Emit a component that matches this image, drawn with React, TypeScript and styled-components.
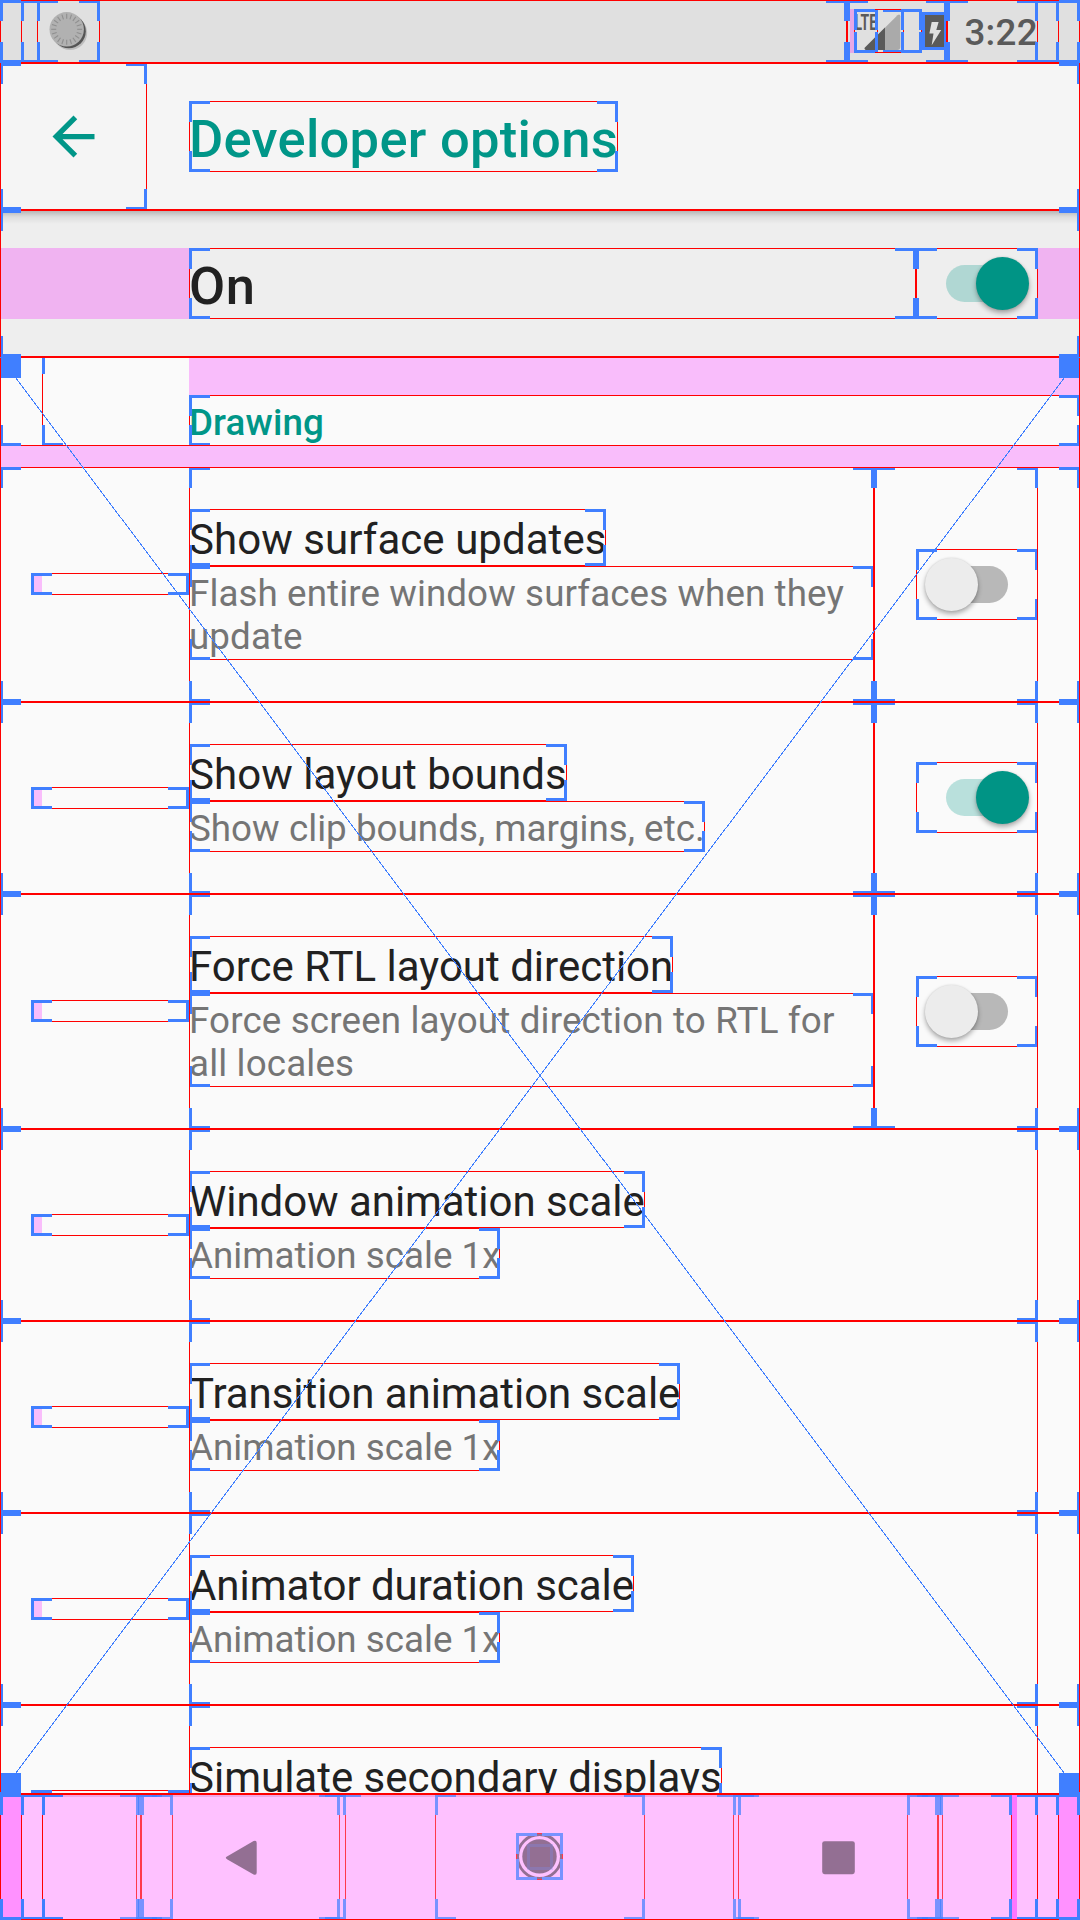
import React from "react";
import styled, { createGlobalStyle, css } from "styled-components";

const RED = "#ff0000";
const BLUE = "#407fff";
const PINK = "#f9bdfb";
const TEAL = "#009688";

const GlobalStyle = createGlobalStyle`
  html, body { margin: 0; padding: 0; background: #fafafa; }
  *, *::before, *::after { box-sizing: border-box; }
`;

/* Layout bounds: a one pixel red outline with 21x3 blue corner brackets. */
const bounds = css`
  position: relative;
  &::after {
    content: "";
    position: absolute;
    inset: 0;
    pointer-events: none;
    background-repeat: no-repeat;
    background-image:
      linear-gradient(${BLUE}, ${BLUE}), linear-gradient(${BLUE}, ${BLUE}),
      linear-gradient(${BLUE}, ${BLUE}), linear-gradient(${BLUE}, ${BLUE}),
      linear-gradient(${BLUE}, ${BLUE}), linear-gradient(${BLUE}, ${BLUE}),
      linear-gradient(${BLUE}, ${BLUE}), linear-gradient(${BLUE}, ${BLUE}),
      linear-gradient(${RED}, ${RED}), linear-gradient(${RED}, ${RED}),
      linear-gradient(${RED}, ${RED}), linear-gradient(${RED}, ${RED});
    background-position:
      left top, right top, left bottom, right bottom,
      left top, right top, left bottom, right bottom,
      left top, left bottom, left top, right top;
    background-size:
      21px 3px, 21px 3px, 21px 3px, 21px 3px,
      3px 21px, 3px 21px, 3px 21px, 3px 21px,
      100% 1px, 100% 1px, 1px 100%, 1px 100%;
  }
`;

const Screen = styled.div`
  width: 1080px;
  height: 1920px;
  display: flex;
  flex-direction: column;
  overflow: hidden;
  background: #fafafa;
  color: #212121;
  font-family: Roboto, "Noto Sans", sans-serif;
`;

/* ---------- status bar ---------- */

const StatusBar = styled.header`
  ${bounds}
  height: 63px;
  flex: none;
  padding: 0 21px;
  background: #e0e0e0;
`;

const StatusContents = styled.div`
  ${bounds}
  height: 63px;
  display: flex;
  padding-right: 21px;
`;

const NotificationArea = styled.div`
  ${bounds}
  flex: 1;
  padding-left: 16px;
`;

const NotificationIcon = styled.div`
  ${bounds}
  width: 63px;
  height: 63px;
  svg { display: block; }
`;

const SystemIcons = styled.div`
  ${bounds}
  width: 100px;
  padding: 9px 0 0 3px;
  display: flex;
`;

const SignalMargin = styled.div`
  width: 4px;
  height: 44px;
  background: #e6a9e6;
`;

const SignalGroup = styled.div`
  ${bounds}
  width: 68px;
  height: 44px;
`;

const SignalIcon = styled.div`
  ${bounds}
  width: 50px;
  height: 44px;
`;

const NetworkType = styled.div`
  ${bounds}
  width: 24px;
  height: 44px;
  svg { display: block; overflow: visible; }
`;

const Battery = styled.div`
  ${bounds}
  width: 25px;
  height: 38px;
  margin-top: 3px;
  svg { display: block; }
`;

const Clock = styled.div`
  ${bounds}
  width: 91px;
  font-size: 36.75px;
  font-weight: 500;
  line-height: 43px;
  letter-spacing: 0.3px;
  padding-top: 11px;
  text-align: right;
  color: #5a5a5a;
`;

/* ---------- toolbar and master switch ---------- */

const Toolbar = styled.div`
  ${bounds}
  height: 147px;
  flex: none;
  display: flex;
  background: #f5f5f5;
`;

const BackButton = styled.div`
  ${bounds}
  width: 147px;
  height: 147px;
  display: flex;
  align-items: center;
  justify-content: center;
`;

const ScreenTitle = styled.h1`
  ${bounds}
  margin: 38px 0 0 42px;
  width: 429px;
  height: 71px;
  padding-top: 7px;
  font-size: 52.5px;
  font-weight: 500;
  line-height: 62px;
  letter-spacing: 0.26px;
  white-space: nowrap;
  color: ${TEAL};
`;

const SwitchBar = styled.div`
  ${bounds}
  height: 147px;
  flex: none;
  display: flex;
  padding: 38px 0 38px;
  background: linear-gradient(rgba(0, 0, 0, 0.26), rgba(0, 0, 0, 0.07) 7px, rgba(0, 0, 0, 0) 14px) #eeeeee;
`;

const BarMargin = styled.div<{ $width: number }>`
  width: ${(p) => p.$width}px;
  height: 71px;
  background: #f0b3f1;
`;

const BarLabel = styled.div`
  ${bounds}
  flex: 1;
  height: 71px;
  padding-top: 7px;
  font-size: 52.5px;
  font-weight: 500;
  line-height: 62px;
  letter-spacing: 0.5px;
`;

const SwitchBox = styled.div`
  ${bounds}
  width: 122px;
  height: 71px;
  flex: none;
  padding: 17px 0 0 30px;
`;

const Track = styled.div<{ $on: boolean }>`
  width: 62px;
  height: 37px;
  border-radius: 19px;
  background: ${(p) => (p.$on ? "rgba(0,150,136,0.26)" : "#b8b8b8")};
`;

const Thumb = styled.div<{ $on: boolean }>`
  position: absolute;
  top: 9px;
  left: ${(p) => (p.$on ? 60 : 9)}px;
  width: 53px;
  height: 53px;
  border-radius: 50%;
  background: ${(p) => (p.$on ? "#009485" : "#ececec")};
  box-shadow: 0 3px 5px rgba(0, 0, 0, 0.32), 0 0 2px rgba(0, 0, 0, 0.12);
`;

/* ---------- preference list ---------- */

const List = styled.main`
  ${bounds}
  height: 1437px;
  flex: none;
  overflow: hidden;
`;

const Category = styled.div`
  ${bounds}
  height: 93px;
  margin-top: -4px;
  padding-left: 42px;
`;

const CategoryContents = styled.div`
  ${bounds}
  height: 93px;
  padding-left: 147px;
`;

const CategoryMargin = styled.div`
  height: 42px;
  background: ${PINK};
`;

const CategoryTitle = styled.h2`
  ${bounds}
  margin: 0;
  height: 51px;
  padding-top: 6px;
  font-size: 36.75px;
  font-weight: 500;
  line-height: 43px;
  letter-spacing: 0.12px;
  color: ${TEAL};
`;

const CategoryGap = styled.div`
  height: 21px;
  background: ${PINK};
`;

const Row = styled.div`
  ${bounds}
  display: flex;
  min-height: 192px;
  padding: 0 42px 0 31px;
`;

const IconSlot = styled.div`
  ${bounds}
  width: 158px;
  height: 22px;
  margin-bottom: 1px;
  align-self: center;
  flex: none;
`;

const IconMargin = styled.div`
  width: 11px;
  height: 22px;
  background: ${PINK};
`;

const TextGroup = styled.div`
  ${bounds}
  flex: 1;
  min-width: 0;
  padding: 42px 0;
  display: flex;
  flex-direction: column;
  align-items: flex-start;
`;

const Title = styled.div<{ $tracking: number }>`
  ${bounds}
  height: 57px;
  padding-top: 6px;
  font-size: 42px;
  line-height: 49px;
  letter-spacing: ${(p) => p.$tracking}px;
  white-space: nowrap;
`;

const Summary = styled.div<{ $tracking: number }>`
  ${bounds}
  padding: 6px 0 2px;
  font-size: 36.75px;
  line-height: 43px;
  letter-spacing: ${(p) => p.$tracking}px;
  color: #757575;
`;

const WidgetFrame = styled.div`
  ${bounds}
  width: 164px;
  flex: none;
  display: flex;
  align-items: center;
  justify-content: flex-end;
  ${SwitchBox} { margin-bottom: 1px; }
`;

/* ---------- navigation bar ---------- */

const NavBar = styled.footer`
  ${bounds}
  height: 126px;
  flex: none;
  padding: 0 21px;
  background: #ff91ff;
`;

const NavFrame = styled.div`
  ${bounds}
  height: 126px;
  padding: 0 21px;
  background: linear-gradient(#efa9e6, #efa9e6) 0 0 / 100% 3px no-repeat #fec1ff;
`;

const NavContents = styled.div`
  ${bounds}
  height: 126px;
`;

const NavButtons = styled.div`
  height: 126px;
  display: flex;
  padding-left: 94px;
  opacity: 0.7;
`;

const NavButton = styled.div<{ $gap?: number }>`
  ${bounds}
  width: 210px;
  height: 126px;
  margin-right: ${(p) => p.$gap ?? 0}px;
  display: flex;
  align-items: center;
  justify-content: center;
`;

const HomeIcon = styled.div`
  ${bounds}
  width: 47px;
  height: 47px;
  margin: 0 1px 1px 0;
  svg { display: block; overflow: visible; }
`;

const HomeCore = styled.div`
  ${bounds}
  position: absolute;
  left: 11px;
  top: 11px;
  width: 26px;
  height: 26px;
  opacity: 0.25;
`;

const NavBounds = styled.div<{ $from: number; $to: number; $flat?: boolean }>`
  ${bounds}
  position: absolute;
  top: 0;
  left: ${(p) => p.$from - 42}px;
  width: ${(p) => p.$to - p.$from}px;
  height: ${(p) => (p.$flat ? 3 : 126)}px;
  opacity: 0.7;
  ${(p) => p.$flat && css`&::after { background-size: 21px 3px, 21px 3px, 0 0, 0 0, 0 0, 0 0, 0 0, 0 0, 0 0, 0 0, 0 0, 0 0; }`}
`;

const NavMargin = styled.div`
  position: absolute;
  top: 1px;
  left: 970px;
  width: 5px;
  height: 125px;
  background: #ff75ff;
`;

/* ---------- overlays ---------- */

const WindowEdges = styled.div`
  position: absolute;
  left: 0;
  top: 63px;
  width: 1080px;
  height: 1731px;
  border: solid ${RED};
  border-width: 0 1px;
  pointer-events: none;
`;

const ScrollCross = styled.svg`
  position: absolute;
  left: 0;
  top: 0;
  display: block;
`;

function Toggle({ on }: { on: boolean }) {
  return (
    <SwitchBox role="switch" aria-checked={on}>
      <Track $on={on} />
      <Thumb $on={on} />
    </SwitchBox>
  );
}

interface Preference {
  title: string;
  titleTracking?: number;
  summary?: string;
  summaryTracking?: number;
  on?: boolean;
}

const preferences: Preference[] = [
  {
    title: "Show surface updates",
    titleTracking: 0.05,
    summary: "Flash entire window surfaces when they update",
    summaryTracking: 0.09,
    on: false,
  },
  {
    title: "Show layout bounds",
    titleTracking: 0.05,
    summary: "Show clip bounds, margins, etc.",
    summaryTracking: 0.03,
    on: true,
  },
  {
    title: "Force RTL layout direction",
    summary: "Force screen layout direction to RTL for all locales",
    summaryTracking: 0.15,
    on: false,
  },
  { title: "Window animation scale", titleTracking: -0.05, summary: "Animation scale 1x" },
  { title: "Transition animation scale", titleTracking: -0.06, summary: "Animation scale 1x" },
  { title: "Animator duration scale", titleTracking: -0.05, summary: "Animation scale 1x" },
  { title: "Simulate secondary displays" },
];

function PreferenceRow({ title, titleTracking = 0, summary, summaryTracking = 0, on }: Preference) {
  return (
    <Row>
      <IconSlot>
        <IconMargin />
      </IconSlot>
      <TextGroup>
        <Title $tracking={titleTracking}>{title}</Title>
        {summary && <Summary $tracking={summaryTracking}>{summary}</Summary>}
      </TextGroup>
      {on !== undefined && (
        <WidgetFrame>
          <Toggle on={on} />
        </WidgetFrame>
      )}
    </Row>
  );
}

const ticks = Array.from({ length: 20 }, (_, i) => (i * 360) / 20);

function Spinner() {
  return (
    <svg width="63" height="63" viewBox="0 0 63 63">
      <circle cx="33" cy="32.8" r="17.2" fill="#bdbdbd" />
      <circle cx="31.8" cy="31.3" r="17" fill="#555" />
      <circle cx="29.7" cy="29.3" r="17.2" fill="#b1b1b1" />
      {ticks.map((a) => (
        <path key={a} d="M29.7 13.8v5" stroke="#8f8f8f" strokeWidth="1.1" transform={`rotate(${a} 29.7 29.3)`} />
      ))}
    </svg>
  );
}

export default function App() {
  return (
    <>
      <GlobalStyle />
      <Screen>
        <StatusBar>
          <StatusContents>
            <NotificationArea>
              <NotificationIcon>
                <Spinner />
              </NotificationIcon>
            </NotificationArea>
            <SystemIcons>
              <SignalMargin />
              <SignalGroup>
                <SignalIcon>
                  <NetworkType>
                    <svg width="50" height="44" viewBox="0 0 50 44">
                      <path d="M11 40.5q-1-1 0-2L43.5 6.3q2.5-2 2.8 1V38q0 3-3 3H12z" fill="#aaaaaa" />
                      <path d="M11 40.5q-1-1 0-2L31 18.6V41H12z" fill="#5a5a5a" />
                      <text x="0.5" y="21" fontSize="22.5" fontWeight="700" textLength="22.5" lengthAdjust="spacingAndGlyphs" fill="#5a5a5a">
                        LTE
                      </text>
                    </svg>
                  </NetworkType>
                </SignalIcon>
              </SignalGroup>
              <Battery>
                <svg width="25" height="38" viewBox="0 0 25 38">
                  <rect x="3" y="3" width="19" height="32" fill="#5a5a5a" />
                  <path d="M9.7 10h6.9l-2.3 8h4.9L9.7 33.2l1.8-11.6H7.4z" fill="#e0e0e0" />
                </svg>
              </Battery>
            </SystemIcons>
            <Clock>3:22</Clock>
          </StatusContents>
        </StatusBar>

        <Toolbar>
          <BackButton>
            <svg width="63" height="63" viewBox="0 0 24 24">
              <path d="M20 11H7.83l5.59-5.59L12 4l-8 8 8 8 1.41-1.41L7.83 13H20v-2z" fill={TEAL} />
            </svg>
          </BackButton>
          <ScreenTitle>Developer options</ScreenTitle>
        </Toolbar>

        <SwitchBar>
          <BarMargin $width={189} />
          <BarLabel>On</BarLabel>
          <Toggle on />
          <BarMargin $width={42} />
        </SwitchBar>

        <List>
          <Category>
            <CategoryContents>
              <CategoryMargin />
              <CategoryTitle>Drawing</CategoryTitle>
            </CategoryContents>
          </Category>
          <CategoryGap />
          {preferences.map((p) => (
            <PreferenceRow key={p.title} {...p} />
          ))}
        </List>

        <NavBar>
          <NavFrame>
            <NavContents>
              <NavMargin />
              <NavButtons>
                <NavButton $gap={89}>
                  <svg width="63" height="63" viewBox="0 0 63 63">
                    <path d="M17.4 30.2L43.6 15q3.1-1.2 3.1 2v29.5q0 3.2-3.1 2L17.4 33.4q-3.2-1.6 0-3.2z" fill="#664d66" />
                  </svg>
                </NavButton>
                <NavButton $gap={88}>
                  <HomeIcon>
                    <svg width="47" height="47" viewBox="0 0 47 47">
                      <circle cx="23.5" cy="23.4" r="21.9" fill="none" stroke="#664d66" strokeWidth="2.8" />
                      <circle cx="23.5" cy="23.4" r="17.2" fill="#664d66" />
                    </svg>
                    <HomeCore />
                  </HomeIcon>
                </NavButton>
                <NavButton>
                  <svg width="63" height="63" viewBox="0 0 63 63">
                    <rect x="15.2" y="15.2" width="32.6" height="33" rx="2.4" fill="#664d66" />
                  </svg>
                </NavButton>
              </NavButtons>
              <NavBounds $from={42} $to={141} />
              <NavBounds $from={42} $to={173} />
              <NavBounds $from={141} $to={340} />
              <NavBounds $from={340} $to={738} $flat />
              <NavBounds $from={738} $to={938} />
              <NavBounds $from={907} $to={1012} />
              <NavBounds $from={938} $to={1012} />
            </NavContents>
          </NavFrame>
        </NavBar>
      </Screen>
      <WindowEdges />
      <ScrollCross width="1080" height="1920" viewBox="0 0 1080 1920" shapeRendering="crispEdges">
        <path d="M0 357L1080 1794M1080 357L0 1794" stroke={BLUE} strokeWidth="1" fill="none" />
        <path d="M1 357h20v21H1zM1059 357h20v21h-20zM1 1773h20v21H1zM1059 1773h20v21h-20z" fill={BLUE} />
      </ScrollCross>
    </>
  );
}
